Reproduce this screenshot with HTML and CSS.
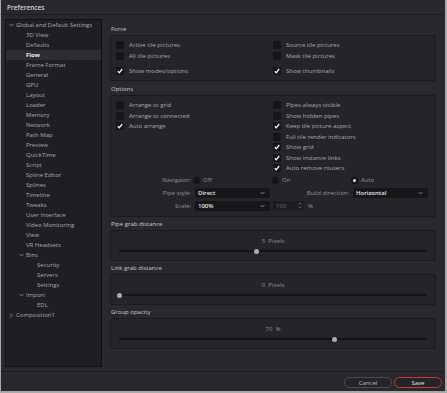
FILE: index.html
```html
<!DOCTYPE html>
<html>
<head>
<meta charset="utf-8">
<title>Preferences</title>
<link rel="stylesheet" href="styles.css">
</head>
<body>
<div class="window">
 <div class="titlebar">Preferences</div>
 <div class="main">
  <div class="sidebar">
   <div class="tree">
    <div class="row l0"><span class="chev"><svg width="5" height="4" viewBox="0 0 5 4"><polyline points="0.5,1 2.5,3 4.5,1"/></svg></span>Global and Default Settings</div>
    <div class="row l1"><span class="chev"></span>3D View</div>
    <div class="row l1"><span class="chev"></span>Defaults</div>
    <div class="row l1 sel"><span class="chev"></span>Flow</div>
    <div class="row l1"><span class="chev"></span>Frame Format</div>
    <div class="row l1"><span class="chev"></span>General</div>
    <div class="row l1"><span class="chev"></span>GPU</div>
    <div class="row l1"><span class="chev"></span>Layout</div>
    <div class="row l1"><span class="chev"></span>Loader</div>
    <div class="row l1"><span class="chev"></span>Memory</div>
    <div class="row l1"><span class="chev"></span>Network</div>
    <div class="row l1"><span class="chev"></span>Path Map</div>
    <div class="row l1"><span class="chev"></span>Preview</div>
    <div class="row l1"><span class="chev"></span>QuickTime</div>
    <div class="row l1"><span class="chev"></span>Script</div>
    <div class="row l1"><span class="chev"></span>Spline Editor</div>
    <div class="row l1"><span class="chev"></span>Splines</div>
    <div class="row l1"><span class="chev"></span>Timeline</div>
    <div class="row l1"><span class="chev"></span>Tweaks</div>
    <div class="row l1"><span class="chev"></span>User Interface</div>
    <div class="row l1"><span class="chev"></span>Video Monitoring</div>
    <div class="row l1"><span class="chev"></span>View</div>
    <div class="row l1"><span class="chev"></span>VR Headsets</div>
    <div class="row l1"><span class="chev"><svg width="5" height="4" viewBox="0 0 5 4"><polyline points="0.5,1 2.5,3 4.5,1"/></svg></span>Bins</div>
    <div class="row l2"><span class="chev"></span>Security</div>
    <div class="row l2"><span class="chev"></span>Servers</div>
    <div class="row l2"><span class="chev"></span>Settings</div>
    <div class="row l1"><span class="chev"><svg width="5" height="4" viewBox="0 0 5 4"><polyline points="0.5,1 2.5,3 4.5,1"/></svg></span>Import</div>
    <div class="row l2"><span class="chev"></span>EDL</div>
    <div class="row l0"><span class="chev"><svg width="4" height="5" viewBox="0 0 4 5"><polyline points="1,0.5 3,2.5 1,4.5"/></svg></span>Composition1</div>
   </div>
  </div>

  <div class="content">
   <div class="sec-label">Force</div>
   <div class="box force">
    <div class="col">
     <div class="cb"><span class="check"></span>Active tile pictures</div>
     <div class="cb"><span class="check"></span>All tile pictures</div>
     <div class="cb gap"><span class="check on"><svg width="6" height="6" viewBox="0 0 6 6"><polyline points="0.8,3.2 2.3,4.8 5.2,1"/></svg></span>Show modes/options</div>
    </div>
    <div class="col">
     <div class="cb"><span class="check"></span>Source tile pictures</div>
     <div class="cb"><span class="check"></span>Mask tile pictures</div>
     <div class="cb gap"><span class="check on"><svg width="6" height="6" viewBox="0 0 6 6"><polyline points="0.8,3.2 2.3,4.8 5.2,1"/></svg></span>Show thumbnails</div>
    </div>
   </div>

   <div class="sec-label">Options</div>
   <div class="box options">
    <div class="cols">
     <div class="col">
      <div class="cb"><span class="check"></span>Arrange to grid</div>
      <div class="cb"><span class="check"></span>Arrange to connected</div>
      <div class="cb"><span class="check on"><svg width="6" height="6" viewBox="0 0 6 6"><polyline points="0.8,3.2 2.3,4.8 5.2,1"/></svg></span>Auto arrange</div>
     </div>
     <div class="col">
      <div class="cb"><span class="check"></span>Pipes always visible</div>
      <div class="cb"><span class="check"></span>Show hidden pipes</div>
      <div class="cb"><span class="check on"><svg width="6" height="6" viewBox="0 0 6 6"><polyline points="0.8,3.2 2.3,4.8 5.2,1"/></svg></span>Keep tile picture aspect</div>
      <div class="cb"><span class="check"></span>Full tile render indicators</div>
      <div class="cb"><span class="check on"><svg width="6" height="6" viewBox="0 0 6 6"><polyline points="0.8,3.2 2.3,4.8 5.2,1"/></svg></span>Show grid</div>
      <div class="cb"><span class="check on"><svg width="6" height="6" viewBox="0 0 6 6"><polyline points="0.8,3.2 2.3,4.8 5.2,1"/></svg></span>Show instance links</div>
      <div class="cb"><span class="check on"><svg width="6" height="6" viewBox="0 0 6 6"><polyline points="0.8,3.2 2.3,4.8 5.2,1"/></svg></span>Auto remove routers</div>
     </div>
    </div>

    <div class="frow">
     <span class="flabel">Navigator:</span>
     <span class="radio"><span class="dot"></span>Off</span>
     <span class="radio"><span class="dot"></span>On</span>
     <span class="radio"><span class="dot on"></span>Auto</span>
    </div>
    <div class="frow">
     <span class="flabel">Pipe style:</span>
     <span class="select">Direct<svg width="5" height="4" viewBox="0 0 5 4"><polyline points="0.5,1 2.5,3 4.5,1"/></svg></span>
     <span class="flabel wide">Build direction:</span>
     <span class="select">Horizontal<svg width="5" height="4" viewBox="0 0 5 4"><polyline points="0.5,1 2.5,3 4.5,1"/></svg></span>
    </div>
    <div class="frow">
     <span class="flabel">Scale:</span>
     <span class="select">100%<svg width="5" height="4" viewBox="0 0 5 4"><polyline points="0.5,1 2.5,3 4.5,1"/></svg></span>
     <span class="spin">100<svg width="4" height="7" viewBox="0 0 4 7"><polyline points="0.5,2.5 2,1 3.5,2.5"/><polyline points="0.5,4.5 2,6 3.5,4.5"/></svg></span>
     <span class="unit">%</span>
    </div>
   </div>

   <div class="sec-label small">Pipe grab distance</div>
   <div class="box slider">
    <div class="val">5&nbsp;&nbsp;Pixels</div>
    <div class="track ticks-wide"><span class="knob" style="left: 44.5%"></span></div>
   </div>

   <div class="sec-label small">Link grab distance</div>
   <div class="box slider">
    <div class="val">0&nbsp;&nbsp;Pixels</div>
    <div class="track ticks-fine"><span class="knob" style="left: 0%"></span></div>
   </div>

   <div class="sec-label small">Group opacity</div>
   <div class="box slider">
    <div class="val">70&nbsp;&nbsp;%</div>
    <div class="track"><span class="knob" style="left: 70%"></span></div>
   </div>
  </div>
 </div>
 <div class="footer">
  <button class="btn">Cancel</button>
  <button class="btn save">Save</button>
 </div>
</div>
</body>
</html>
```

FILE: styles.css
```css
*{
	box-sizing: border-box;
}

body{
	margin: 0;
	background: #a9a9aa;
	font-family: "Open Sans", "Liberation Sans", sans-serif;
	font-size: 6px;
	color: #a8a8aa;
}

svg polyline{
	fill: none;
	stroke: #8e8e90;
	stroke-width: 0.9;
}

.window{
	width: 447px;
	height: 393px;
	background: #29292d;
	border-style: solid;
	border-color: #a9a9aa;
	border-width: 0 2px 2px 1px;
	display: flex;
	flex-direction: column;
}

.titlebar{
	height: 15px;
	padding: 3px 0 0 6px;
	border-bottom: 1px solid #1c1c20;
	color: #d0d0d2;
	font-size: 6.5px;
	font-weight: 600;
}

.main{
	flex: 1;
	display: flex;
	min-height: 0;
}

/* tree */
.sidebar{
	width: 107px;
	padding: 4px 0 4px 4px;
	display: flex;
}

.tree{
	width: 97px;
	background: #1f1f23;
	border: 1px solid #111114;
	padding-top: 0;
}

.tree .row{
	height: 10px;
	display: flex;
	align-items: center;
	white-space: nowrap;
}
.tree .row.l0{ padding-left: 3px; }
.tree .row.l1{ padding-left: 13px; }
.tree .row.l2{ padding-left: 24px; }

.tree .chev{
	width: 7px;
	display: flex;
	align-items: center;
}

.tree .row.sel{
	background: #2d2d32;
	color: #f0f0f0;
	font-weight: 700;
}

/* right side */
.content{
	flex: 1;
	padding: 6px 9px 0 4px;
}

.sec-label{
	height: 14px;
	padding: 4px 0 0 1px;
	color: #c8c8ca;
}
.sec-label.small{
	height: 13px;
	padding-top: 3px;
}

.box{
	background: #252529;
	border: 1px solid #1b1b1e;
	border-radius: 2px;
}

.force{
	height: 46px;
	padding: 4px 5px;
	display: grid;
	grid-template-columns: 1fr 1fr;
}

.options{
	height: 122px;
	padding: 4px 5px;
}
.options .cols{
	display: grid;
	grid-template-columns: 1fr 1fr;
	height: 74px;
}

.cb{
	height: 10.5px;
	display: flex;
	align-items: center;
	white-space: nowrap;
}
.cb.gap{
	margin-top: 5px;
}

.check{
	width: 8px;
	height: 8px;
	margin-right: 5px;
	background: #151518;
	border-radius: 1px;
	display: flex;
	align-items: center;
	justify-content: center;
}
.check svg polyline{
	stroke: #f4f4f4;
	stroke-width: 1.3;
}

/* form rows */
.frow{
	height: 12.8px;
	display: flex;
	align-items: center;
	margin-left: -5px;
	white-space: nowrap;
}

.flabel{
	width: 82px;
	padding-right: 2px;
	text-align: right;
	color: #929294;
}
.flabel.wide{
	width: 81px;
}

.radio{
	width: 79px;
	display: flex;
	align-items: center;
	color: #929294;
}
.radio:first-of-type{
	margin-left: 2px;
}

.dot{
	width: 7px;
	height: 7px;
	margin-right: 3px;
	border-radius: 50%;
	background: #141417;
	display: flex;
	align-items: center;
	justify-content: center;
}
.dot.on::after{
	content: "";
	width: 3px;
	height: 3px;
	border-radius: 50%;
	background: #f4f4f4;
}

.select{
	width: 75px;
	height: 10px;
	margin-left: 2px;
	padding: 0 5px 0 3px;
	background: #161619;
	border-radius: 2px;
	color: #e6e6e8;
	font-weight: 600;
	display: flex;
	align-items: center;
	justify-content: space-between;
}

.spin{
	width: 31px;
	height: 10px;
	margin-left: 3px;
	padding: 0 2px 0 3px;
	background: #1d1d21;
	border-radius: 2px;
	color: #6e6e72;
	display: flex;
	align-items: center;
	justify-content: space-between;
}
.spin svg polyline{
	stroke: #66666a;
}

.unit{
	margin-left: 4px;
	color: #929294;
}

/* sliders */
.slider{
	height: 31px;
	padding: 6px 8px 0 8px;
}

.val{
	height: 12px;
	text-align: center;
	color: #929294;
}

.track{
	position: relative;
	height: 2px;
	background: #131316;
	margin-top: 1px;
}
.track.ticks-wide{
	background:
		repeating-linear-gradient(90deg, #3a3a3f 0 1px, transparent 1px 34.2px) 0 3px / 100% 1px no-repeat,
		#131316;
}

.knob{
	position: absolute;
	top: -1.5px;
	width: 5px;
	height: 5px;
	margin-left: -2.5px;
	border-radius: 50%;
	background: #acacae;
}

/* footer */
.footer{
	height: 20px;
	border-top: 1px solid #1c1c20;
	padding: 5px 3px 0 0;
	display: flex;
	justify-content: flex-end;
	gap: 2px;
}

.btn{
	width: 48px;
	height: 11px;
	padding: 0;
	border: 1px solid #4a4a4f;
	border-radius: 6px;
	background: #242428;
	color: #bcbcbe;
	font-family: "Open Sans", "Liberation Sans", sans-serif;
	font-size: 6px;
}
.btn.save{
	border-color: #c43a3c;
	color: #e4e4e6;
}
```
